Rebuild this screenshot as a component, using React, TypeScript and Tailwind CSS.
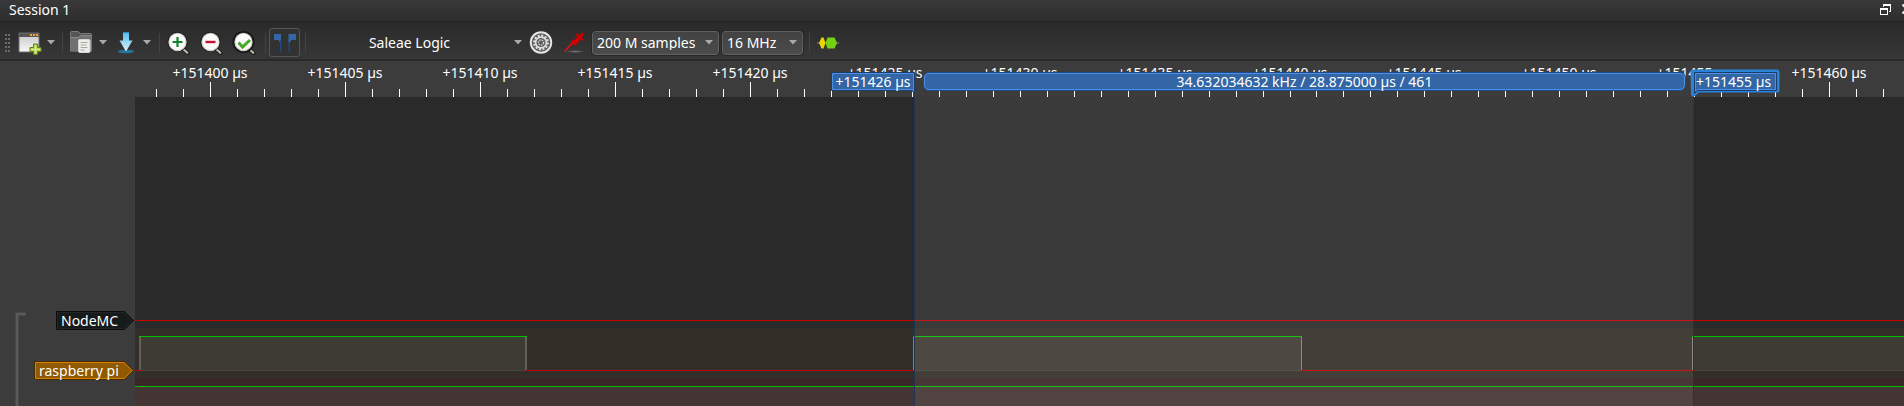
import type { ReactNode } from 'react';

const MINOR_STEP = 26.98;
const FIRST_MAJOR = 75.3;
const TICKS = Array.from({ length: 67 }, (_, i) => i - 2);
const MAJORS = Array.from({ length: 13 }, (_, i) => i);

const tickX = (k: number) => Math.round(FIRST_MAJOR + k * MINOR_STEP);

function Caret() {
  return (
    <svg width="8" height="5" viewBox="0 0 8 5" aria-hidden="true">
      <path d="M0 0H8L4 4.6Z" fill="#a9a9a9" />
    </svg>
  );
}

function Separator({ className }: { className: string }) {
  return <div className={`h-5 w-px shrink-0 bg-[#434343] ${className}`} />;
}

function Tool({ label, className = '', children }: { label: string; className?: string; children: ReactNode }) {
  return (
    <button type="button" aria-label={label} className={`flex h-6 w-6 shrink-0 items-center justify-center ${className}`}>
      {children}
    </button>
  );
}

function MenuArrow({ label }: { label: string }) {
  return (
    <button type="button" aria-label={label} className="flex h-6 w-[18px] shrink-0 items-center justify-center">
      <Caret />
    </button>
  );
}

function Magnifier({ big = false, children }: { big?: boolean; children: ReactNode }) {
  return (
    <svg width="24" height="24" viewBox="0 0 24 24" aria-hidden="true">
      <path d="M16.5 17.5L21.5 22" stroke="#1c1c1a" strokeWidth="4" strokeLinecap="round" />
      <path d="M16.5 17.5L21.3 21.8" stroke="#bdb9ad" strokeWidth="2.2" strokeLinecap="round" />
      <circle cx="11.5" cy="11" r={big ? 11 : 10} fill="#171717" />
      <circle cx="11.5" cy="11" r="9.2" fill="#c9c5b8" />
      <circle cx="11.5" cy="11" r="8.2" fill="#fafafa" />
      {children}
    </svg>
  );
}

function Toolbar() {
  return (
    <div className="flex h-[39px] items-center border-b-2 border-[#292929] bg-linear-to-b from-[#2a2a2a] to-[#373737] pt-[4px] pl-[5px]">
      <svg width="5" height="18" viewBox="0 0 5 18" className="shrink-0" aria-hidden="true">
        {[0, 4, 8, 12, 16].map((y) => (
          <g key={y} fill="#6b6b6b">
            <rect x="0" y={y} width="2" height="2" />
            <rect x="3" y={y} width="2" height="2" />
          </g>
        ))}
      </svg>

      <Tool label="New session" className="ml-2">
        <svg width="24" height="24" viewBox="0 0 24 24" aria-hidden="true">
          <defs>
            <linearGradient id="pane" x1="0" y1="0" x2="0" y2="1">
              <stop offset="0" stopColor="#cfcfcf" />
              <stop offset="1" stopColor="#f7f7f7" />
            </linearGradient>
          </defs>
          <rect x="0.5" y="1.5" width="21" height="20" rx="1" fill="#6d6d6d" />
          <rect x="1.5" y="6" width="19" height="14.5" fill="url(#pane)" />
          <path d="M1.5 2.5H20.5V6H1.5Z" fill="#555" />
          <path d="M12 3h2v2h-2zM15 3h2v2h-2zM18 3h2v2h-2z" fill="#f0a63a" />
          <path d="M15.5 13h4v3.5h3.6v4h-3.6v3h-4v-3H12v-4h3.5Z" fill="#b5d552" stroke="#5b7d14" strokeWidth="1" />
          <path d="M17.5 14.2v8.4M13.2 18.5h8.6" stroke="#dcec9c" strokeWidth="1.2" />
        </svg>
      </Tool>
      <MenuArrow label="New session menu" />
      <Separator className="ml-[2px]" />

      <Tool label="Open" className="ml-[7px]">
        <svg width="24" height="24" viewBox="0 0 24 24" aria-hidden="true">
          <path d="M0.5 20V1.5Q0.5 0.5 1.5 0.5H8L10.5 2.5H20.5Q21.5 2.5 21.5 3.5V20Z" fill="#555" stroke="#7c7c7c" strokeWidth="1" />
          <path d="M0.5 6.5H8L10.5 4.5H21.5V20.5H0.5Z" fill="#707070" />
          <path d="M1 6.5H8.2L10.4 4.7H21.3" stroke="#8c8c8c" strokeWidth="1" fill="none" />
          <rect x="8.5" y="8.5" width="11.5" height="13" rx="1.2" fill="#ededeb" stroke="#d4d4d0" />
          <path d="M10.5 11.5h7M10.5 14h6M10.5 16.5h7M10.5 19h4" stroke="#aaa89f" strokeWidth="1" />
        </svg>
      </Tool>
      <MenuArrow label="Open menu" />

      <Tool label="Save" className="ml-[2px]">
        <svg width="24" height="24" viewBox="0 0 24 24" aria-hidden="true">
          <defs>
            <linearGradient id="arrow" x1="0" y1="0" x2="0" y2="1">
              <stop offset="0" stopColor="#55b8ef" />
              <stop offset="0.6" stopColor="#a5ddf7" />
              <stop offset="1" stopColor="#dff4fd" />
            </linearGradient>
          </defs>
          <ellipse cx="12" cy="20.5" rx="8" ry="1.8" fill="#23749f" />
          <path d="M9 1H15V9.5H18.5L12 20.5L5.5 9.5H9Z" fill="url(#arrow)" />
          <path d="M9 1H15V2.2H9Z" fill="#318fc8" />
        </svg>
      </Tool>
      <MenuArrow label="Save menu" />
      <Separator className="ml-[3px]" />

      <Tool label="Zoom in" className="ml-[6px]">
        <Magnifier>
          <path d="M11.5 6v10M6.5 11h10" stroke="#10842c" strokeWidth="2.2" />
        </Magnifier>
      </Tool>
      <Tool label="Zoom out" className="ml-[9px]">
        <Magnifier>
          <path d="M6.5 11h10" stroke="#c8102e" strokeWidth="2.4" />
        </Magnifier>
      </Tool>
      <Tool label="Zoom to fit" className="ml-[9px]">
        <Magnifier big>
          <path d="M6.5 11.5L10.5 16L18 9" stroke="#45a827" strokeWidth="3" fill="none" />
        </Magnifier>
      </Tool>
      <Separator className="ml-[9px]" />

      <button
        type="button"
        aria-label="Show cursors"
        aria-pressed="true"
        className="ml-[3px] flex h-[29px] w-[31px] shrink-0 items-center justify-center rounded-[3px] border border-[#555] bg-[#323232]"
      >
        <svg width="24" height="24" viewBox="0 0 24 24" aria-hidden="true">
          <path d="M1 3H8V21H7V11.5L5.5 9H1Z" fill="#3465a4" />
          <path d="M7 9V21H8.2V9ZM15.5 9V21H16.7V9Z" fill="#1f4a87" />
          <path d="M15.5 3H23V9H18.5L16.5 11.5H15.5Z" fill="#3465a4" />
        </svg>
      </button>
      <Separator className="ml-[5px]" />

      <button type="button" className="flex h-6 w-[220px] shrink-0 items-center pl-[3px]">
        <span className="flex-1 text-center">Saleae Logic</span>
        <span className="flex w-4 justify-center">
          <Caret />
        </span>
      </button>

      <Tool label="Configure device" className="ml-[3px]">
        <svg width="24" height="24" viewBox="0 0 24 24" aria-hidden="true">
          <circle cx="12" cy="11.5" r="11.2" fill="#e6e6e6" />
          <circle cx="12" cy="11.5" r="9.3" fill="#5c5c5c" />
          <circle cx="12" cy="11.5" r="6.9" fill="none" stroke="#e0e0e0" strokeWidth="2" strokeDasharray="2.1 1.51" />
          <circle cx="12" cy="11.5" r="5.4" fill="none" stroke="#e0e0e0" strokeWidth="1.6" />
          <circle cx="12" cy="11.5" r="2.6" fill="none" stroke="#cfcfcf" strokeWidth="1.4" strokeDasharray="1.6 0.9" />
        </svg>
      </Tool>
      <Tool label="Configure channels" className="ml-[10px]">
        <svg width="24" height="24" viewBox="0 0 24 24" aria-hidden="true">
          <defs>
            <radialGradient id="shade">
              <stop offset="0" stopColor="#777" />
              <stop offset="1" stopColor="#777" stopOpacity="0" />
            </radialGradient>
          </defs>
          <ellipse cx="12" cy="20.5" rx="10" ry="1.5" fill="url(#shade)" />
          <path d="M1.5 20.5L11 10" stroke="#e01010" strokeWidth="1.8" />
          <path d="M9.5 9.5L13 12.8" stroke="#cc0000" strokeWidth="2" strokeLinecap="round" />
          <path d="M8.5 12.5L15 4.5L18.8 8L11 14.8Z" fill="#cc0000" />
          <path d="M13.8 3.6L19.6 8.6" stroke="#cc0000" strokeWidth="2" strokeLinecap="round" />
          <path d="M15.5 5.5L18.5 1.2L21 3.2L18 7.5Z" fill="#cc0000" />
        </svg>
      </Tool>

      <div className="relative ml-[5px] w-[127px] shrink-0">
        <select aria-label="Sample count" className="h-6 w-full appearance-none rounded-[3px] border border-[#616161] bg-linear-to-b from-[#424242] to-[#4b4b4b] pl-1 outline-1 outline-[#272727]">
          <option>200 M samples</option>
        </select>
        <span className="pointer-events-none absolute inset-y-0 right-[6px] flex items-center">
          <Caret />
        </span>
      </div>
      <div className="relative ml-[3px] w-[81px] shrink-0">
        <select aria-label="Sample rate" className="h-6 w-full appearance-none rounded-[3px] border border-[#616161] bg-linear-to-b from-[#424242] to-[#4b4b4b] pl-1 outline-1 outline-[#272727]">
          <option>16 MHz</option>
        </select>
        <span className="pointer-events-none absolute inset-y-0 right-[6px] flex items-center">
          <Caret />
        </span>
      </div>
      <Separator className="ml-[6px]" />

      <Tool label="Add protocol decoder" className="ml-[7px]">
        <svg width="24" height="24" viewBox="0 0 24 24" aria-hidden="true">
          <path d="M0 12H22" stroke="#8a8a80" strokeWidth="1" />
          <path d="M4.5 6.5H6.5L8.5 12L6.5 17.5H4.5L2 12Z" fill="#edd400" />
          <path d="M10.5 6.5H17.5L20 12L17.5 17.5H10.5L8.5 12Z" fill="#73d216" />
        </svg>
      </Tool>
    </div>
  );
}

function Ruler() {
  return (
    <div className="relative h-9 overflow-hidden">
      {MAJORS.map((m) => (
        <span key={m} className="absolute top-0 w-[100px] text-center leading-6" style={{ left: tickX(m * 5) - 50 }}>
          {`+${151400 + m * 5} µs`}
        </span>
      ))}
      <svg width="100%" height="36" className="absolute inset-0" shapeRendering="crispEdges" aria-hidden="true">
        {TICKS.map((k) => (
          <rect key={k} x={tickX(k)} y={k % 5 === 0 ? 21 : 28} width="1" height={k % 5 === 0 ? 15 : 8} fill="#fff" />
        ))}
      </svg>
    </div>
  );
}

function Cursors() {
  return (
    <>
      <div className="absolute top-9 bottom-0 left-[779px] w-[780px] border-x border-[#1c3658] bg-white/8" />
      <div className="absolute top-[11px] left-[788px] h-[19px] w-[763px] rounded-[6px] border border-[#204a87] bg-[#3465a4]">
        <div className="flex h-[17px] items-center justify-center rounded-[5px] border border-[#4a90e8] pt-px">
          34.632034632 kHz / 28.875000 µs / 461
        </div>
      </div>
      <div className="absolute top-[11px] left-[696px] h-[22px] w-[84px]">
        <svg width="84" height="22" viewBox="0 0 84 22" className="absolute inset-0" aria-hidden="true">
          <path d="M0.5 0.5H83.5V21.5L80.5 18.5H0.5Z" fill="#3465a4" stroke="#1d3c68" />
          <path d="M1.5 1.5H82.5V19L81.2 17.5H1.5Z" fill="none" stroke="#4a90e8" />
        </svg>
        <span className="relative flex h-[19px] items-center justify-center pt-px">+151426 µs</span>
      </div>
      <div className="absolute top-2 left-[1555px] h-[28px] w-[90px]">
        <svg width="90" height="28" viewBox="0 0 90 28" className="absolute inset-0" aria-hidden="true">
          <path d="M3 3H87V21H8L3.5 25Z" fill="#3465a4" stroke="#2a82da" strokeWidth="5" strokeLinejoin="round" />
          <path d="M4.5 3.5H86.5V21.5H7.5L4.5 24.5Z" fill="#3465a4" stroke="#1d3c68" />
          <path d="M5.5 4.5H85.5V20.5H7L5.5 22Z" fill="none" stroke="#4a90e8" />
        </svg>
        <span className="relative flex h-[25px] items-center pt-px pl-[6px]">+151455 µs</span>
      </div>
    </>
  );
}

function Waveforms() {
  return (
    <svg width="100%" height="100%" className="absolute inset-0" shapeRendering="crispEdges" aria-hidden="true">
      <rect y="231" width="100%" height="50" fill="#332f28" />
      <rect y="281" width="100%" height="100%" fill="#392727" />
      <rect y="290" width="100%" height="100%" fill="#443434" />

      <rect x="5" y="240" width="386" height="33" fill="#3e3b34" />
      <rect x="778" y="240" width="388" height="33" fill="#3f3933" />
      <rect x="1557" y="240" width="100%" height="33" fill="#3e3b34" />
      <rect x="5" y="273" width="386" height="1" fill="#47433e" />
      <rect x="778" y="273" width="388" height="1" fill="#47433e" />
      <rect x="1557" y="273" width="100%" height="1" fill="#47433e" />

      <rect x="4" y="239" width="2" height="34" fill="#62605b" />
      <rect x="390" y="239" width="2" height="34" fill="#62605b" />
      <rect x="778" y="239" width="1" height="34" fill="#81807d" />
      <rect x="1166" y="239" width="1" height="34" fill="#81807d" />
      <rect x="1557" y="239" width="1" height="34" fill="#81807d" />

      <rect y="223" width="100%" height="1" fill="#c80000" />
      <rect x="4" y="239" width="388" height="1" fill="#00c000" />
      <rect x="778" y="239" width="389" height="1" fill="#00c000" />
      <rect x="1557" y="239" width="100%" height="1" fill="#00c000" />
      <rect x="0" y="273" width="6" height="1" fill="#c80000" />
      <rect x="390" y="273" width="389" height="1" fill="#c80000" />
      <rect x="1166" y="273" width="392" height="1" fill="#c80000" />
      <rect y="289" width="100%" height="1" fill="#00c000" />
    </svg>
  );
}

function ChannelNames() {
  return (
    <div className="relative flex w-[135px] shrink-0 flex-col items-end pt-[250px] pr-[1px]">
      <div className="absolute top-[251px] bottom-0 left-[15px] w-[11px] rounded-tl-[3px] border-t-4 border-l-4 border-[#484848]" />
      <div className="absolute top-[252px] bottom-0 left-4 w-[10px] rounded-tl-[2px] border-t-2 border-l-2 border-[#5a5a57]" />
      <div className="relative h-[19px] w-[78px]">
        <svg width="78" height="19" viewBox="0 0 78 19" className="absolute inset-0" aria-hidden="true">
          <path d="M0.5 0.5H68.5L77.5 9.5L68.5 18.5H0.5Z" fill="#161a1b" stroke="#0b0d0e" />
          <path d="M1.5 1.5H68L76 9.5L68 17.5H1.5Z" fill="none" stroke="#202627" />
        </svg>
        <span className="relative flex h-[19px] items-center pl-[5px]">NodeMC</span>
      </div>
      <div className="relative mt-[31px] h-[19px] w-[100px]">
        <svg width="100" height="19" viewBox="0 0 100 19" className="absolute inset-0" aria-hidden="true">
          <path d="M0.5 0.5H90.5L99.5 9.5L90.5 18.5H0.5Z" fill="#8f5902" stroke="#472c01" />
          <path d="M1.5 1.5H90L98 9.5L90 17.5H1.5Z" fill="none" stroke="#d87f05" />
        </svg>
        <span className="relative flex h-[19px] items-center pl-[5px]">raspberry pi</span>
      </div>
    </div>
  );
}

export default function App() {
  return (
    <div className="flex min-h-screen flex-col overflow-hidden bg-[#3c3c3c] font-['Noto_Sans','Open_Sans',sans-serif] text-sm leading-none text-white">
      <header className="flex h-[22px] items-center justify-between border-b border-[#242424] bg-linear-to-b from-[#393939] to-[#2d2d2d] pl-[9px]">
        <h1 className="pb-px">Session 1</h1>
        <div className="flex items-center">
          <button type="button" aria-label="Float session" className="pb-[3px]">
            <svg width="11" height="11" viewBox="0 0 11 11" shapeRendering="crispEdges" aria-hidden="true">
              <path d="M3 0H11V8H9V7H10V2H4V3H3Z" fill="#fff" />
              <path d="M0 4H8V11H0ZM1 6V10H7V6Z" fill="#fff" fillRule="evenodd" />
            </svg>
          </button>
          <button type="button" aria-label="Close session" className="ml-[11px] w-[2px] overflow-hidden pb-[3px]">
            <svg width="10" height="10" viewBox="0 0 10 10" className="max-w-none" aria-hidden="true">
              <path d="M0.5 0.5L9.5 9.5M9.5 0.5L0.5 9.5" stroke="#fff" strokeWidth="2" />
            </svg>
          </button>
        </div>
      </header>
      <Toolbar />
      <main className="flex flex-1">
        <ChannelNames />
        <div className="relative flex min-w-0 flex-1 flex-col overflow-hidden">
          <Ruler />
          <div className="relative flex-1 bg-[#2a2a2a]">
            <Waveforms />
          </div>
          <Cursors />
        </div>
      </main>
    </div>
  );
}
